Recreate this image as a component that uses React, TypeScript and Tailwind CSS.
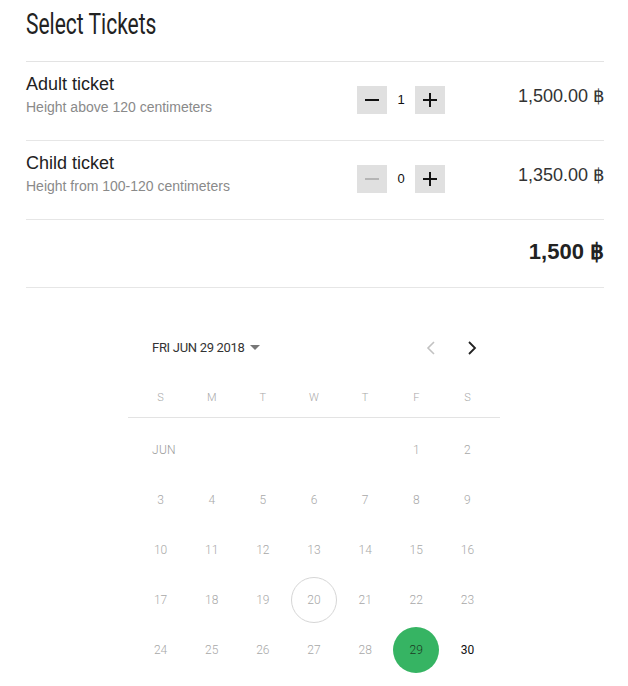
import React from "react";

const sans = { fontFamily: '"Liberation Sans", Arial, sans-serif' };

function Stepper({ value, disabled }: { value: number; disabled?: boolean }) {
  return (
    <div className="flex items-center">
      <button className="w-[30px] h-[28px] bg-[#e0e0e0] flex items-center justify-center">
        <svg width="16" height="16" viewBox="0 0 16 16">
          <path d="M1 8h14" stroke={disabled ? "#b5b5b5" : "#111"} strokeWidth="2" />
        </svg>
      </button>
      <div className="w-[28px] text-center text-[13px] text-[#111]">{value}</div>
      <button className="w-[30px] h-[28px] bg-[#e0e0e0] flex items-center justify-center">
        <svg width="16" height="16" viewBox="0 0 16 16">
          <path d="M1 8h14M8 1v14" stroke="#111" strokeWidth="2" />
        </svg>
      </button>
    </div>
  );
}

function TicketRow({ title, sub, value, price, disabled }: { title: string; sub: string; value: number; price: string; disabled?: boolean }) {
  return (
    <div className="flex items-center h-[79px] border-b border-[#e6e6e6] pb-[2px]">
      <div className="flex-1 mb-[11px]">
        <div className="text-[18px] text-[#222] leading-[22px]">{title}</div>
        <div className="text-[14px] text-[#8a8a8a] leading-[18px] mt-[3px]">{sub}</div>
      </div>
      <div className="w-[130px] mr-[29px] flex justify-end">
        <Stepper value={value} disabled={disabled} />
      </div>
      <div className="w-[130px] text-right text-[18px] text-[#333] mb-[8px] whitespace-nowrap">{price}</div>
    </div>
  );
}

const weeks: (number | null)[][] = [
  [null, null, null, null, null, 1, 2],
  [3, 4, 5, 6, 7, 8, 9],
  [10, 11, 12, 13, 14, 15, 16],
  [17, 18, 19, 20, 21, 22, 23],
  [24, 25, 26, 27, 28, 29, 30],
];

export default function App() {
  return (
    <div className="w-[628px] h-[686px] bg-white overflow-hidden" style={sans}>
      <div className="px-[26px] pr-[24px]">
        <div className="h-[62px] border-b border-[#e3e3e3] pt-[6px]">
          <h1
            className="text-[30px] leading-[36px] text-[#222] font-normal origin-left scale-x-[0.7] whitespace-nowrap"
            style={{ fontFamily: "Roboto, sans-serif" }}
          >
            Select Tickets
          </h1>
        </div>
        <TicketRow title="Adult ticket" sub="Height above 120 centimeters" value={1} price="1,500.00 ฿" />
        <TicketRow title="Child ticket" sub="Height from 100-120 centimeters" value={0} price="1,350.00 ฿" disabled />
        <div className="h-[68px] border-b border-[#e6e6e6] flex items-center justify-end pb-[4px]">
          <div className="text-[22px] font-bold text-[#222]">1,500 ฿</div>
        </div>
      </div>

      <div className="w-[372px] ml-[128px] mt-[42px]" style={{ fontFamily: "Roboto, sans-serif" }}>
        <div className="flex items-center h-[36px] pl-[24px]">
          <div className="text-[13px] text-[#333] tracking-[-0.3px]">FRI JUN 29 2018</div>
          <svg width="10" height="6" viewBox="0 0 10 6" className="ml-[5px]">
            <path d="M0 0h10L5 5z" fill="#777" />
          </svg>
          <div className="flex-1" />
          <svg width="10" height="14" viewBox="0 0 10 14" className="mr-[31px]">
            <path d="M8 1L2 7l6 6" stroke="#c2c2c2" strokeWidth="1.6" fill="none" />
          </svg>
          <svg width="10" height="14" viewBox="0 0 10 14" className="mr-[23px]">
            <path d="M2 1l6 6-6 6" stroke="#222" strokeWidth="1.8" fill="none" />
          </svg>
        </div>
        <div className="mt-[14px] border-b border-[#e3e3e3] px-[7px] grid grid-cols-7 h-[38px] items-center pb-[1px]">
          {["S", "M", "T", "W", "T", "F", "S"].map((d, i) => (
            <div key={i} className="text-center text-[11px] font-light text-[#a8a8a8]">{d}</div>
          ))}
        </div>
        <div className="px-[7px] pt-[7px]">
          {weeks.map((w, ri) => (
            <div key={ri} className="grid grid-cols-7 h-[50px] items-center">
              {w.map((d, ci) => {
                if (ri === 0 && ci === 0)
                  return (
                    <div key={ci} className="text-[12px] font-light text-[#999] pl-[17px] tracking-[0.3px]">JUN</div>
                  );
                if (d === null) return <div key={ci} />;
                const selected = d === 29;
                const today = d === 20;
                const dark = d === 30;
                return (
                  <div key={ci} className="flex items-center justify-center">
                    <div
                      className={
                        "w-[46px] h-[46px] rounded-full flex items-center justify-center text-[12px] font-light " +
                        (selected
                          ? "bg-[#36b463] text-[#1a3a22] "
                          : today
                          ? "border border-[#d6d6d6] text-[#a8a8a8] "
                          : dark
                          ? "text-[#111] font-normal "
                          : "text-[#a8a8a8] ")
                      }
                    >
                      {d}
                    </div>
                  </div>
                );
              })}
            </div>
          ))}
        </div>
      </div>
    </div>
  );
}
